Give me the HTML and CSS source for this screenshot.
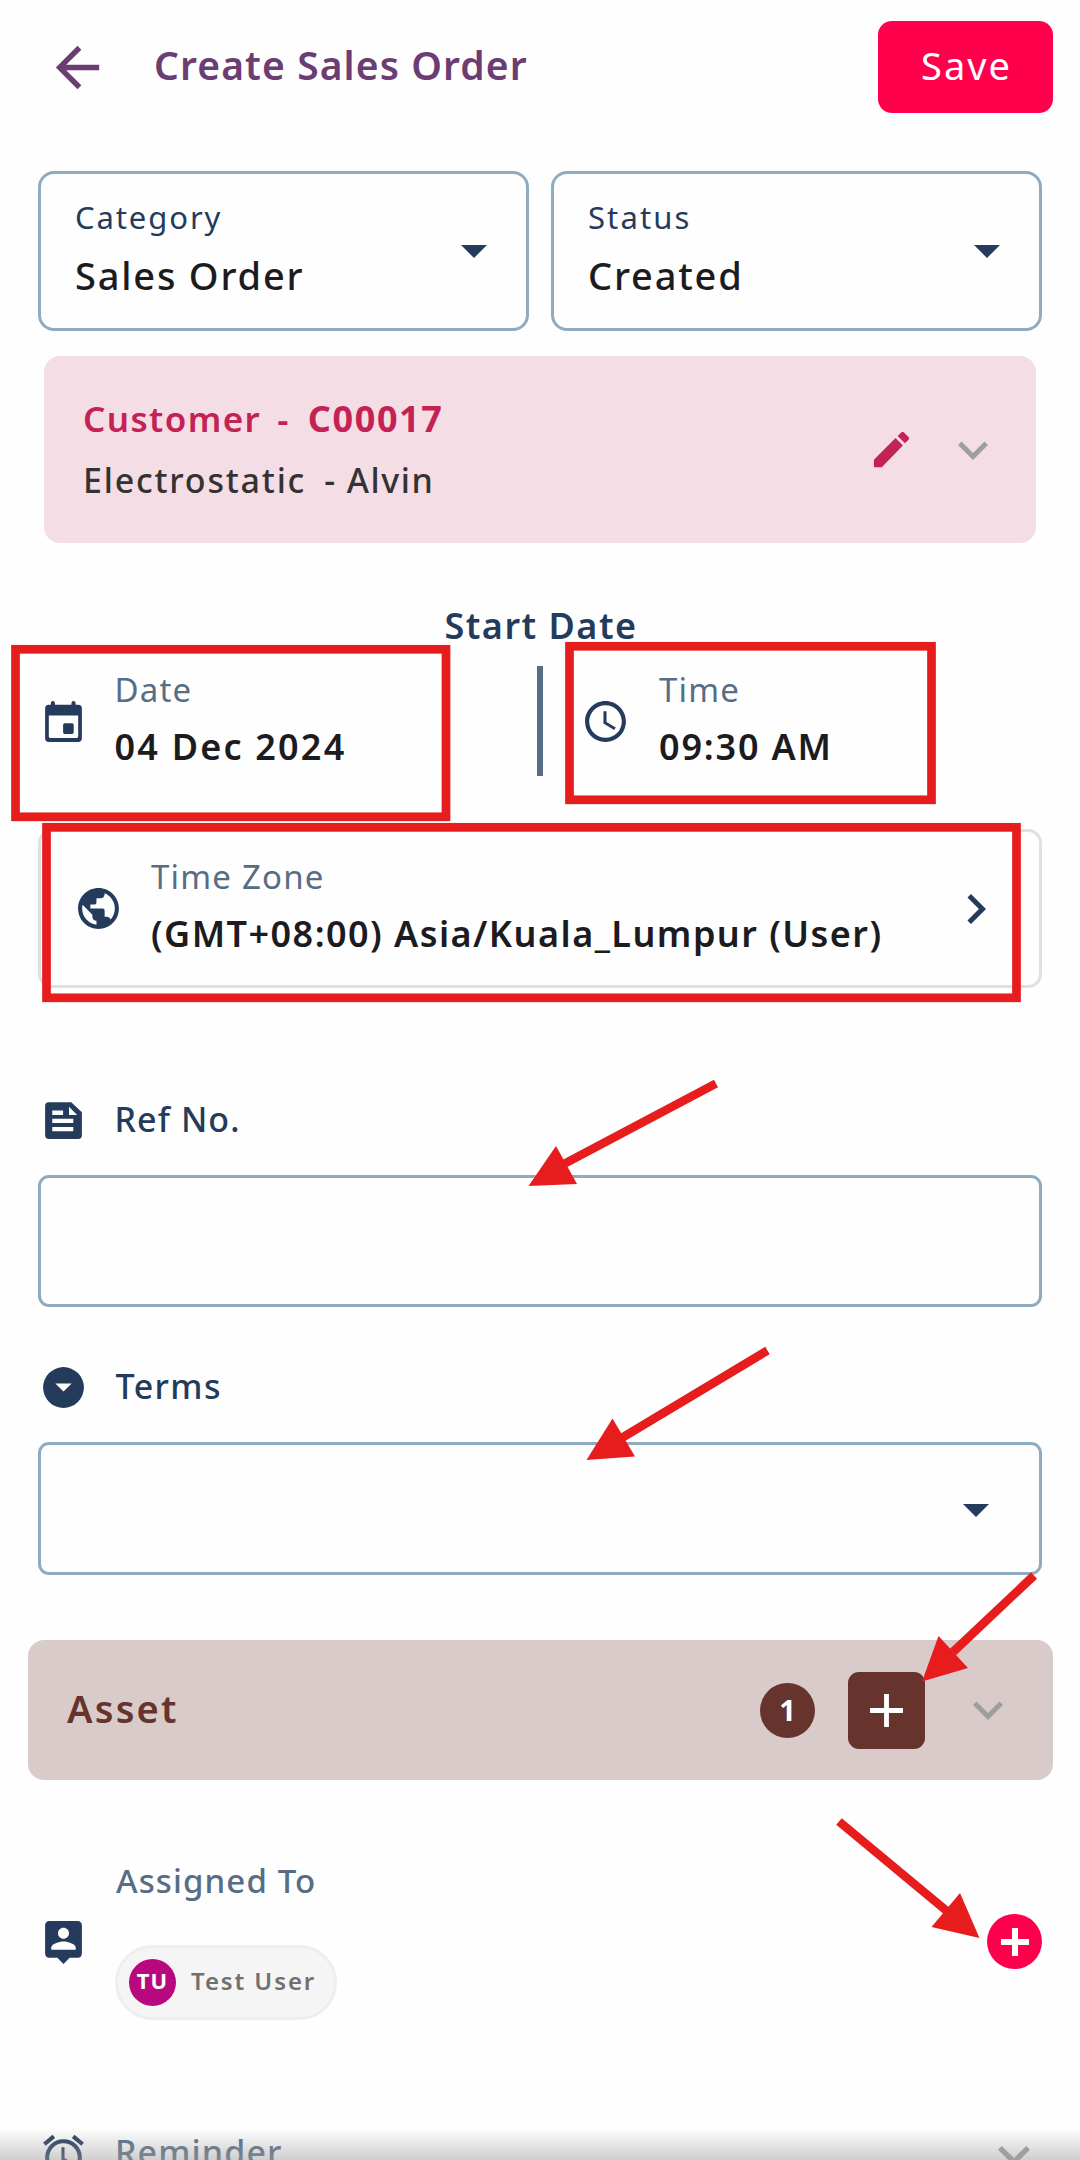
FILE: index.html
```
<!DOCTYPE html>
<html lang="en">
<head>
<meta charset="utf-8">
<title>Create Sales Order</title>
<link rel="stylesheet" href="styles.css">
</head>
<body>
<div class="page">
  <header class="header">
    <svg class="back" viewBox="0 0 24 24"><path d="M20 11H7.83l5.59-5.59L12 4l-8 8 8 8 1.41-1.41L7.83 13H20v-2z"/></svg>
    <h1 class="title">Create Sales Order</h1>
    <button class="save">Save</button>
  </header>

  <main class="form">
    <div class="selects">
      <div class="select">
        <div>
          <div class="select-label">Category</div>
          <div class="select-value">Sales Order</div>
        </div>
        <svg class="caret" viewBox="0 0 26 13"><path d="M0 0h26L13 13z"/></svg>
      </div>
      <div class="select">
        <div>
          <div class="select-label status">Status</div>
          <div class="select-value">Created</div>
        </div>
        <svg class="caret" viewBox="0 0 26 13"><path d="M0 0h26L13 13z"/></svg>
      </div>
    </div>

    <section class="customer">
      <div class="customer-text">
        <div class="customer-id"><span>Customer</span><span class="dash">-</span><b>C00017</b></div>
        <div class="customer-name"><span>Electrostatic</span><span class="dash">-</span><span class="person">Alvin</span></div>
      </div>
      <svg class="pencil" viewBox="0 0 24 24"><path d="M3 17.46v3.04c0 .28.22.5.5.5h3.54L17.81 9.94l-3.75-3.75L3.15 17.1c-.1.1-.15.22-.15.36zM20.71 7.04a1 1 0 0 0 0-1.41l-2.34-2.34a1 1 0 0 0-1.41 0l-1.83 1.83 3.75 3.75 1.83-1.83z"/></svg>
      <svg class="chevron" viewBox="0 0 24 24"><path d="M7.41 8.59 12 13.17l4.59-4.58L18 10l-6 6-6-6z"/></svg>
    </section>

    <h2 class="start-date">Start Date</h2>
    <div class="datetime">
      <div class="field date">
        <svg class="icon" viewBox="0 0 24 24"><path fill-rule="evenodd" d="M6.8 2a1 1 0 0 1 1 1v.8h8.1V3a1 1 0 0 1 2 0v.8h1.3A1.8 1.8 0 0 1 21 5.6v14.6a1.8 1.8 0 0 1-1.8 1.8H4.8A1.8 1.8 0 0 1 3 20.2V5.6a1.8 1.8 0 0 1 1.8-1.8h1V3a1 1 0 0 1 1-1zM4.8 9v10.4a.7.7 0 0 0 .7.7h13a.7.7 0 0 0 .7-.7V9zM12.6 12.9h3.6a.8.8 0 0 1 .8.8v3.6a.8.8 0 0 1-.8.8h-3.6a.8.8 0 0 1-.8-.8v-3.6a.8.8 0 0 1 .8-.8z"/></svg>
        <div>
          <div class="field-label">Date</div>
          <div class="field-value day">04 Dec 2024</div>
        </div>
      </div>
      <div class="divider"></div>
      <div class="field time">
        <svg class="icon" viewBox="0 0 24 24"><path d="M11.99 2C6.47 2 2 6.48 2 12s4.47 10 9.99 10C17.52 22 22 17.52 22 12S17.52 2 11.99 2zM12 20c-4.42 0-8-3.58-8-8s3.58-8 8-8 8 3.58 8 8-3.58 8-8 8zm.5-13H11v6l5.25 3.15.75-1.23-4.5-2.67z"/></svg>
        <div>
          <div class="field-label">Time</div>
          <div class="field-value hour">09:30 AM</div>
        </div>
      </div>
    </div>

    <div class="timezone">
      <svg class="icon" viewBox="0 0 24 24"><path d="M12 2C6.48 2 2 6.48 2 12s4.48 10 10 10 10-4.48 10-10S17.52 2 12 2zm-1 17.93c-3.95-.49-7-3.85-7-7.93 0-.62.08-1.21.21-1.79L9 15v1c0 1.1.9 2 2 2v1.93zm6.9-2.54c-.26-.81-1-1.39-1.9-1.39h-1v-3c0-.55-.45-1-1-1H8v-2h2c.55 0 1-.45 1-1V7h2c1.1 0 2-.9 2-2v-.41c2.93 1.19 5 4.06 5 7.41 0 2.08-.8 3.97-2.1 5.39z"/></svg>
      <div class="timezone-text">
        <div class="field-label">Time Zone</div>
        <div class="field-value zone">(GMT+08:00) Asia/Kuala_Lumpur (User)</div>
      </div>
      <svg class="chevron navy" viewBox="0 0 24 24"><path d="M10 6 8.59 7.41 13.17 12l-4.58 4.59L10 18l6-6z"/></svg>
    </div>

    <div class="label-row ref">
      <svg class="icon" viewBox="0 0 24 24"><path fill-rule="evenodd" d="M4.8 3h11L21 8v11.2a1.8 1.8 0 0 1-1.8 1.8H4.8A1.8 1.8 0 0 1 3 19.2V4.8A1.8 1.8 0 0 1 4.8 3zM14.7 5.3v4h4zM6.5 7.1v2.2h5.3V7.1zM6.5 11.1v2.1h10.3v-2.1zM6.5 15.2v2.1h10.3v-2.1z"/></svg>
      <span>Ref No.</span>
    </div>
    <div class="input"></div>

    <div class="label-row terms">
      <svg class="icon" viewBox="0 0 24 24"><path fill-rule="evenodd" d="M12 2a10 10 0 1 0 0 20 10 10 0 0 0 0-20zM8 10h8l-4 4z"/></svg>
      <span>Terms</span>
    </div>
    <div class="input dropdown">
      <svg class="caret" viewBox="0 0 26 13"><path d="M0 0h26L13 13z"/></svg>
    </div>

    <section class="asset">
      <h2 class="asset-title">Asset</h2>
      <span class="count">1</span>
      <button class="asset-add"><svg viewBox="0 0 34 34"><path d="M17 0v34M0 17h34"/></svg></button>
      <svg class="chevron" viewBox="0 0 24 24"><path d="M7.41 8.59 12 13.17l4.59-4.58L18 10l-6 6-6-6z"/></svg>
    </section>

    <section class="assigned">
      <svg class="icon" viewBox="0 0 24 24"><path fill-rule="evenodd" d="M19 2H5c-1.11 0-2 .9-2 2v14c0 1.1.89 2 2 2h4l3 3 3-3h4c1.1 0 2-.9 2-2V4c0-1.1-.9-2-2-2zm-7 3.3c1.49 0 2.7 1.21 2.7 2.7s-1.21 2.7-2.7 2.7S9.3 9.49 9.3 8s1.21-2.7 2.7-2.7zM18 16H6v-.9c0-2 4-3.1 6-3.1s6 1.1 6 3.1z"/></svg>
      <div class="assigned-body">
        <div class="assigned-label">Assigned To</div>
        <div class="chip"><span class="avatar">TU</span><span class="chip-name">Test User</span></div>
      </div>
      <button class="assign-add"><svg viewBox="0 0 28 28"><path d="M14 0v28M0 14h28"/></svg></button>
    </section>

    <section class="reminder">
      <svg class="icon" viewBox="0 0 24 24"><path d="m22 5.72-4.6-3.86-1.29 1.53 4.6 3.86zM7.88 3.39 6.6 1.86 2 5.71l1.29 1.53zM12.5 8H11v6l4.75 2.85.75-1.23-4-2.37zM12 4a9 9 0 1 0 0 18 9 9 0 0 0 0-18zm0 16a7 7 0 1 1 0-14 7 7 0 0 1 0 14z"/></svg>
      <span>Reminder</span>
      <svg class="chevron large" viewBox="0 0 24 24"><path d="M7.41 8.59 12 13.17l4.59-4.58L18 10l-6 6-6-6z"/></svg>
    </section>
  </main>

  <div class="bottom-shade"></div>

  <svg class="annotations" viewBox="0 0 1080 2160">
    <g class="frames">
      <rect x="15.5" y="649.3" width="430.5" height="167.5"/>
      <rect x="569.5" y="646.3" width="362" height="153.5"/>
      <rect x="46.5" y="827.3" width="970" height="170.5"/>
    </g>
    <g class="shafts">
      <path d="M716 1083.5 562 1165"/>
      <path d="M767.5 1350.5 620 1439"/>
      <path d="M1034 1575.5 953 1652"/>
      <path d="M839 1821.5 948 1912"/>
    </g>
    <g class="heads">
      <path d="M528.5 1186 556 1146l21 38z"/>
      <path d="M586.5 1460 612.5 1418.5l22.5 38z"/>
      <path d="M922 1681.5 938.5 1636l29.5 32z"/>
      <path d="M979.5 1938 960 1893l-28.500 34z"/>
    </g>
  </svg>
</div>
</body>
</html>
```
FILE: styles.css
```
* { box-sizing: border-box; }

body {
  margin: 0;
  background: #fefefe;
  font-family: "Noto Sans", sans-serif;
  color: #1c1b20;
}

h1, h2 { margin: 0; }

button {
  border: 0;
  padding: 0;
  font-family: inherit;
  display: flex;
  align-items: center;
  justify-content: center;
}

svg { display: block; flex: none; }

.page {
  position: relative;
  width: 1080px;
  height: 2160px;
  overflow: hidden;
}

.header {
  display: flex;
  align-items: center;
  padding: 21px 27px 0 45px;
}

.back { width: 65px; height: 65px; fill: #6b3d73; }

.title {
  flex: 1;
  margin-left: 44px;
  padding-bottom: 5px;
  font-size: 39px;
  font-weight: 600;
  line-height: 48px;
  letter-spacing: 1.1px;
  color: #6b3d73;
}

.save {
  width: 175px;
  height: 92px;
  padding: 0 0 5px 2px;
  border-radius: 14px;
  background: #ff004d;
  color: #fff;
  font-size: 38px;
  letter-spacing: 2px;
}

.form { padding: 58px 38px 0; }

.selects { display: flex; gap: 22px; }

.select {
  flex: 1;
  height: 160px;
  display: flex;
  align-items: center;
  justify-content: space-between;
  padding: 1px 39px 0 34px;
  border: 3px solid #8eabc0;
  border-radius: 16px;
}

.select-label {
  font-size: 31px;
  line-height: 40px;
  letter-spacing: 1.9px;
  color: #243b5c;
}

.select-label.status { letter-spacing: 2.1px; }

.select-value {
  margin: 13px 0 6px;
  font-size: 38px;
  font-weight: 500;
  line-height: 50px;
  letter-spacing: 1.8px;
}

.caret { width: 26px; height: 13px; fill: #243b5c; }

.customer {
  display: flex;
  align-items: center;
  height: 187px;
  margin: 25px 6px 0;
  padding: 0 33px 0 39px;
  border-radius: 16px;
  background: #f5dde5;
}

.customer-text { flex: 1; line-height: 48px; }

.customer-id {
  font-size: 35px;
  font-weight: 600;
  letter-spacing: 1.4px;
  color: #c42254;
}

.customer-id .dash { margin: 0 18px 0 16px; }

.customer-id b {
  font-size: 36px;
  font-weight: 700;
  letter-spacing: 1.6px;
}

.customer-name {
  margin: 13px 0 0;
  font-size: 34px;
  font-weight: 500;
  letter-spacing: 1.8px;
  color: #333;
}

.customer-name .dash { margin: 0 10px 0 18px; }
.customer-name .person { letter-spacing: 1.5px; }

.pencil { width: 47px; height: 47px; margin-right: 28px; fill: #c42254; }

.chevron { width: 60px; height: 60px; fill: #9e9e9e; }
.chevron.navy { fill: #243b5c; }
.chevron.large { width: 64px; height: 64px; }

.start-date {
  margin-top: 58px;
  padding-left: 2px;
  text-align: center;
  font-size: 36px;
  font-weight: 600;
  line-height: 50px;
  letter-spacing: 1.5px;
  color: #243b5c;
}

.icon { width: 49px; height: 49px; fill: #243b5c; }

.datetime {
  display: flex;
  height: 110px;
  margin-top: 15px;
}

.field { display: flex; align-items: center; }
.date { width: 499px; gap: 27px; }
.time { gap: 29px; padding-left: 38px; }
.divider { width: 6px; background: #566d85; }

.field-label {
  font-size: 33px;
  line-height: 44px;
  letter-spacing: 1.2px;
  color: #566d85;
}

.field-value {
  margin-top: 10px;
  font-size: 36px;
  font-weight: 600;
  line-height: 50px;
  white-space: nowrap;
}

.field .field-value { margin-bottom: 2px; }
.day { letter-spacing: 2.2px; }
.hour { letter-spacing: 1.8px; }
.zone { letter-spacing: 1.45px; }

.timezone {
  display: flex;
  align-items: center;
  height: 159px;
  margin-top: 53px;
  padding: 0 33px;
  border: 3px solid #e0e0e0;
  border-radius: 14px;
}

.timezone-text { flex: 1; margin-left: 28px; padding-bottom: 3px; }

.label-row {
  display: flex;
  align-items: center;
  gap: 27px;
  height: 50px;
  font-size: 34px;
  font-weight: 500;
  line-height: 50px;
  letter-spacing: 1.1px;
  color: #243b5c;
}

.date, .label-row { padding-left: .5px; }
.label-row span { padding-bottom: 2px; }
.ref { margin-top: 107px; }
.terms { margin-top: 55px; letter-spacing: 1.4px; }
.terms span { margin-left: 1px; }

.input {
  height: 132px;
  margin-top: 30px;
  border: 3px solid #8eabc0;
  border-radius: 11px;
}

.dropdown {
  display: flex;
  align-items: center;
  justify-content: flex-end;
  height: 133px;
  padding: 3px 50px 0 0;
}

.asset {
  display: flex;
  align-items: center;
  height: 140px;
  margin: 65px -11px 0 -10px;
  padding: 0 35px 0 39px;
  border-radius: 16px;
  background: #d9cbca;
}

.asset-title {
  flex: 1;
  padding-bottom: 4px;
  font-size: 38px;
  font-weight: 600;
  line-height: 50px;
  letter-spacing: 2.2px;
  color: #66342d;
}

.count {
  width: 55px;
  height: 55px;
  border-radius: 50%;
  background: #66342d;
  color: #fff;
  font-size: 29px;
  font-weight: 700;
  line-height: 53px;
  text-align: center;
}

.asset-add {
  width: 77px;
  height: 77px;
  margin: 0 33px;
  border-radius: 11px;
  background: #66342d;
}

.asset-add svg { width: 33px; height: 33px; stroke: #fff; stroke-width: 5; }

.assigned {
  display: flex;
  align-items: center;
  margin-top: 79px;
  padding-left: 1px;
}

.assigned > .icon { margin-top: 4px; }
.assigned-body { flex: 1; margin-left: 27px; }

.assigned-label {
  margin-left: 1px;
  font-size: 33px;
  font-weight: 500;
  line-height: 44px;
  letter-spacing: 1.1px;
  color: #566d85;
}

.chip {
  display: inline-flex;
  align-items: center;
  width: 222px;
  height: 75px;
  margin-top: 42px;
  padding-left: 11px;
  border: 3px solid #eee;
  border-radius: 38px;
  background: #f5f5f5;
  vertical-align: top;
}

.avatar {
  width: 47px;
  height: 47px;
  border-radius: 50%;
  background: #b8087f;
  color: #fff;
  font-size: 22px;
  font-weight: 700;
  line-height: 43px;
  letter-spacing: 1.2px;
  text-align: center;
}

.chip-name {
  margin-left: 15px;
  padding-bottom: 4px;
  font-size: 24px;
  font-weight: 600;
  letter-spacing: 1.9px;
  color: #707070;
  white-space: nowrap;
}

.assign-add {
  width: 55px;
  height: 55px;
  margin-top: 4px;
  border-radius: 50%;
  background: #ff004d;
}

.assign-add svg { width: 28px; height: 28px; stroke: #fff; stroke-width: 6; }

.reminder {
  display: flex;
  align-items: center;
  height: 50px;
  margin-top: 110px;
  padding-left: 1px;
  font-size: 34px;
  font-weight: 500;
  line-height: 50px;
  letter-spacing: 1.1px;
  color: #566d85;
}

.reminder span { flex: 1; margin-left: 27px; padding-bottom: 6px; }
.reminder .chevron { margin-right: -4px; }

/* Fade over the scrolling edge of the form */
.bottom-shade {
  position: absolute;
  inset: auto 0 0;
  height: 32px;
  background: linear-gradient(rgba(160, 160, 160, 0), rgba(160, 160, 160, .5));
}

.annotations {
  position: absolute;
  inset: 0;
  width: 1080px;
  height: 2160px;
  fill: none;
}

.frames, .shafts { stroke: #e71d1d; stroke-width: 8.7; }
.heads { fill: #e71d1d; }
```
